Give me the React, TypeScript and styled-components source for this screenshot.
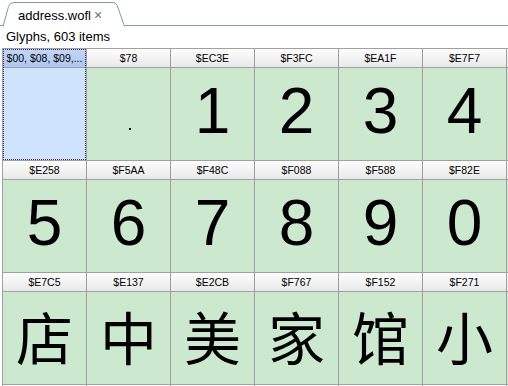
import React from 'react';
import styled, { createGlobalStyle } from 'styled-components';

const GlobalStyle = createGlobalStyle`
  html, body {
    margin: 0;
    padding: 0;
    background: #ffffff;
    overflow: hidden;
  }
  body {
    font-family: 'Liberation Sans', Arial, sans-serif;
  }
`;

// ===== tab bar =====
const Page = styled.div`
  width: 508px;
  height: 386px;
  overflow: hidden;
  background: #ffffff;
`;

const TabBar = styled.div`
  display: flex;
  align-items: flex-end;
  height: 26px;
`;

const TabLead = styled.div`
  width: 3px;
  height: 1px;
  background: #8597a9;
`;

const Tab = styled.div`
  position: relative;
  width: 122px;
  height: 25px;
  flex: none;
`;

const TabFrame = styled.svg`
  position: absolute;
  left: 0;
  top: 0;
  width: 122px;
  height: 26px;
`;

const TabLabel = styled.div`
  position: relative;
  display: flex;
  align-items: center;
  height: 24px;
  padding: 2px 0 0 15px;
  font-size: 13px;
  color: #000;
`;

const TabClose = styled.span`
  margin-left: 3px;
  font-size: 14px;
  color: #6a6a6a;
`;

const TabFiller = styled.div`
  flex: 1;
  height: 1px;
  background: #8597a9;
`;

// ===== caption =====
const Caption = styled.div`
  height: 22px;
  line-height: 22px;
  padding-left: 6px;
  font-size: 13px;
  color: #000;
`;

// ===== glyph grid =====
const Grid = styled.div`
  display: grid;
  grid-template-columns: repeat(7, 83px);
  grid-auto-rows: 111px;
  gap: 1px;
  padding: 1px 0 0 1px;
  margin-left: 2px;
  width: 505px;
  height: 337px;
  overflow: hidden;
  background: #a0a0a0;
`;

const Card = styled.div<{ $selected?: boolean }>`
  display: grid;
  grid-template-rows: 18px 92px;
  gap: 1px;
  background: #a0a0a0;
  outline: ${(p) => (p.$selected ? '1px dotted #3a2a5a' : 'none')};
  outline-offset: -1px;
`;

const Head = styled.div<{ $selected?: boolean }>`
  display: flex;
  align-items: center;
  justify-content: center;
  padding: 0 2px;
  overflow: hidden;
  white-space: nowrap;
  font-size: 10.5px;
  color: #000;
  background: ${(p) =>
    p.$selected
      ? 'linear-gradient(#c3d6f6, #aec6f0)'
      : 'linear-gradient(#fdfdfd, #e9e9e9)'};
`;

const Body = styled.div<{ $selected?: boolean; $cjk?: boolean }>`
  display: flex;
  align-items: center;
  justify-content: center;
  padding-bottom: ${(p) => (p.$cjk ? '6px' : '7px')};
  background: ${(p) => (p.$selected ? '#cfe3fc' : '#cce8cf')};
  color: #000;
  font-family: ${(p) =>
    p.$cjk
      ? "'Noto Sans CJK SC', 'Noto Sans', sans-serif"
      : "'Liberation Sans', Arial, sans-serif"};
  font-size: ${(p) => (p.$cjk ? '57px' : '64px')};
  font-weight: 400;
  line-height: 1;
`;

const Dot = styled.span`
  width: 2px;
  height: 2px;
  margin: 36px 0 0 2px;
  background: #000;
`;

type Glyph = { code: string; ch?: string; dot?: boolean; selected?: boolean; cjk?: boolean };

// the 7th column is only a sliver at the right edge, so its labels stay empty
const glyphs: Glyph[] = [
  { code: '$00, $08, $09,...', selected: true },
  { code: '$78', dot: true },
  { code: '$EC3E', ch: '1' },
  { code: '$F3FC', ch: '2' },
  { code: '$EA1F', ch: '3' },
  { code: '$E7F7', ch: '4' },
  { code: '' },
  { code: '$E258', ch: '5' },
  { code: '$F5AA', ch: '6' },
  { code: '$F48C', ch: '7' },
  { code: '$F088', ch: '8' },
  { code: '$F588', ch: '9' },
  { code: '$F82E', ch: '0' },
  { code: '' },
  { code: '$E7C5', ch: '店', cjk: true },
  { code: '$E137', ch: '中', cjk: true },
  { code: '$E2CB', ch: '美', cjk: true },
  { code: '$F767', ch: '家', cjk: true },
  { code: '$F152', ch: '馆', cjk: true },
  { code: '$F271', ch: '小', cjk: true },
  { code: '' },
  { code: '' },
  { code: '' },
  { code: '' },
  { code: '' },
  { code: '' },
  { code: '' },
  { code: '' },
];

const App: React.FC = () => {
  return (
    <Page>
      <GlobalStyle />
      <TabBar>
        <TabLead />
        <Tab>
          <TabFrame viewBox="0 0 122 26">
            <path
              d="M0 25.5 L5.5 5.5 Q6.8 1.5 11 1.5 L110 1.5 Q113 1.5 114.2 4.5 L121.5 25.5"
              fill="#ffffff"
              stroke="#8597a9"
              strokeWidth="1"
            />
          </TabFrame>
          <TabLabel>
            address.wofl
            <TabClose>×</TabClose>
          </TabLabel>
        </Tab>
        <TabFiller />
      </TabBar>

      <Caption>Glyphs, 603 items</Caption>

      <Grid>
        {glyphs.map((g, i) => (
          <Card key={i} $selected={g.selected}>
            <Head $selected={g.selected}>{g.code}</Head>
            <Body $selected={g.selected} $cjk={g.cjk}>
              {g.dot ? <Dot /> : g.ch}
            </Body>
          </Card>
        ))}
      </Grid>
    </Page>
  );
};

export default App;
